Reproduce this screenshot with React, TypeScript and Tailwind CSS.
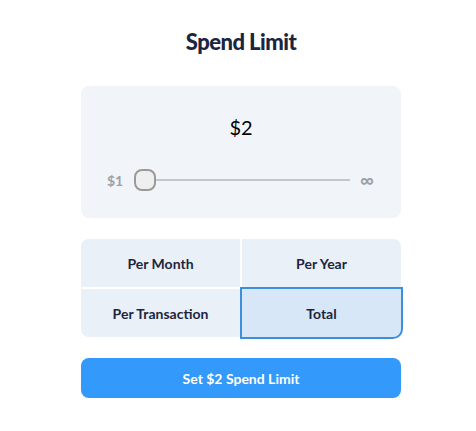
import { useState } from "react";

const periods = ["Per Month", "Per Year", "Per Transaction", "Total"];

export default function App() {
  const [active, setActive] = useState("Total");
  const amount = 2;

  return (
    <div className="w-[476px] h-[431px] bg-white flex flex-col items-center pl-[6px] font-['Lato',sans-serif]">
      <h1 className="mt-[28px] text-[22px] leading-[28px] font-black text-[#1b2540] tracking-tight">Spend Limit</h1>

      <div className="mt-[30px] w-[320px] h-[132px] bg-[#f1f5f9] rounded-lg flex flex-col items-center">
        <div className="mt-[28px] text-[20px] leading-[26px] text-black">${amount}</div>
        <div className="mt-[29px] w-full flex items-center pl-[26px] pr-[27px]">
          <span className="text-[14px] font-bold text-[#9aa1ad]">$1</span>
          <div className="flex-1 flex items-center ml-[11px] mr-[10px]">
            <div className="w-[22px] h-[22px] rounded-[8px] border-2 border-[#9a9a9a] bg-[#efefef]" />
            <div className="flex-1 h-[2px] bg-[#c3c7cf]" />
          </div>
          <span className="text-[19px] leading-[20px] font-bold text-[#9aa1ad]">∞</span>
        </div>
      </div>

      <div className="mt-[21px] w-[320px] grid grid-cols-2 gap-[2px]">
        {periods.map((p, i) => (
          <button
            key={p}
            onClick={() => setActive(p)}
            className={`h-[48px] text-[14px] font-bold text-[#1b2540] ${
              i === 0 ? "rounded-tl-lg" : i === 1 ? "rounded-tr-lg" : i === 2 ? "rounded-bl-lg" : "rounded-br-lg"
            } ${active === p ? "bg-[#d8e7f7] outline-2 outline-[#3d8fdc] relative" : "bg-[#eaf0f7]"}`}
          >
            {p}
          </button>
        ))}
      </div>

      <button className="mt-[21px] w-[320px] h-[40px] rounded-lg bg-[#3399fb] text-white text-[14px] font-bold">
        Set ${amount} Spend Limit
      </button>
    </div>
  );
}
